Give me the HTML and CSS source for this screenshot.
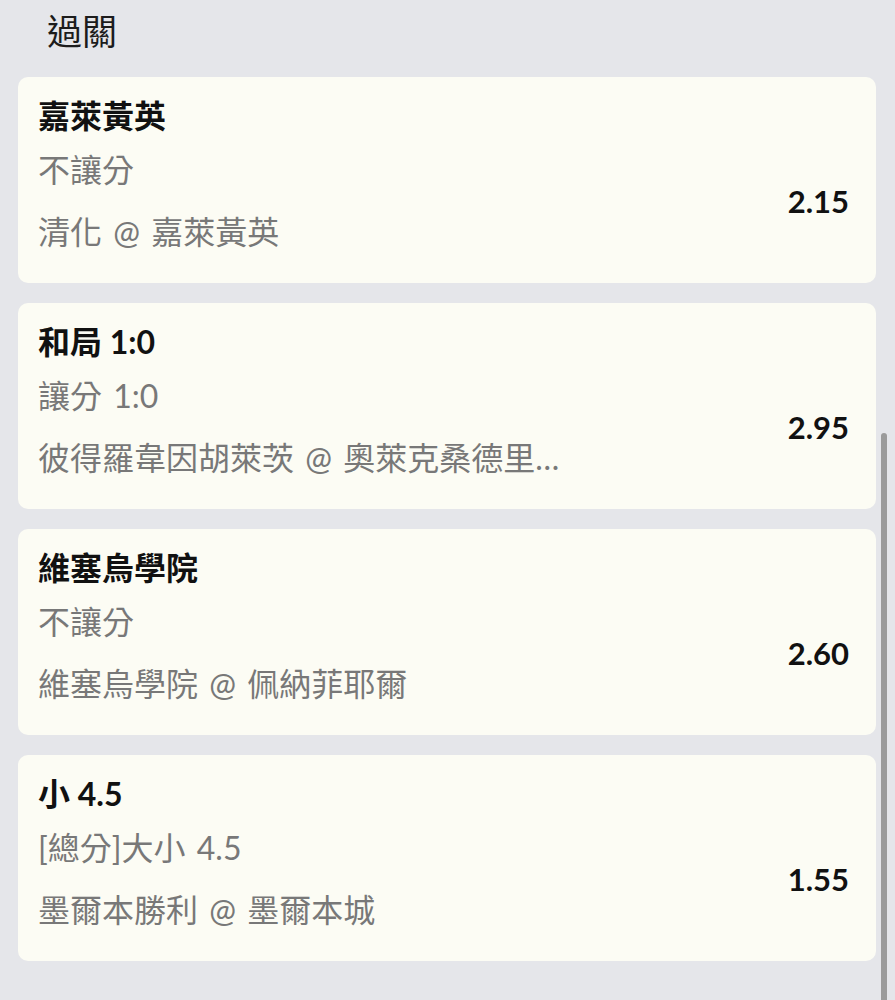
FILE: index.html
```html
<!DOCTYPE html>
<html lang="zh-Hant">
<head>
    <meta charset="UTF-8">
    <meta name="viewport" content="width=device-width, initial-scale=1.0">
    <title>過關</title>
    <link rel="stylesheet" href="styles.css">
</head>
<body>

    <h1 class="page-title">過關</h1>

    <div class="bet-list">
        <div class="bet-card">
            <div class="bet-pick">嘉萊黃英</div>
            <div class="bet-row">
                <div class="bet-lines">
                    <div class="bet-line">不讓分</div>
                    <div class="bet-line">清化 @ 嘉萊黃英</div>
                </div>
                <div class="bet-odds">2.15</div>
            </div>
        </div>

        <div class="bet-card">
            <div class="bet-pick">和局 1:0</div>
            <div class="bet-row">
                <div class="bet-lines">
                    <div class="bet-line">讓分 1:0</div>
                    <div class="bet-line">彼得羅韋因胡萊茨 @ 奧萊克桑德里亞</div>
                </div>
                <div class="bet-odds">2.95</div>
            </div>
        </div>

        <div class="bet-card">
            <div class="bet-pick">維塞烏學院</div>
            <div class="bet-row">
                <div class="bet-lines">
                    <div class="bet-line">不讓分</div>
                    <div class="bet-line">維塞烏學院 @ 佩納菲耶爾</div>
                </div>
                <div class="bet-odds">2.60</div>
            </div>
        </div>

        <div class="bet-card">
            <div class="bet-pick">小 4.5</div>
            <div class="bet-row">
                <div class="bet-lines">
                    <div class="bet-line">[總分]大小 4.5</div>
                    <div class="bet-line">墨爾本勝利 @ 墨爾本城</div>
                </div>
                <div class="bet-odds">1.55</div>
            </div>
        </div>
    </div>

    <!-- scroll indicator -->
    <div class="scroll-thumb"></div>

</body>
</html>
```

FILE: styles.css
```css
/* Reset */
* {
    margin: 0;
    padding: 0;
    box-sizing: border-box;
}

body {
    font-family: 'Lato', 'Noto Sans CJK TC', sans-serif;
    background-color: #e5e6ea;
    color: #111;
    height: 1000px;
    overflow: hidden;
}

.page-title {
    font-size: 35px;
    font-weight: 400;
    line-height: 40px;
    color: #1c1c1c;
    padding: 11px 0 0 47px;
    height: 77px;
}

.bet-list {
    display: flex;
    flex-direction: column;
    gap: 20px;
    padding: 0 19px 0 18px;
}

/* Card */
.bet-card {
    background-color: #fcfcf4;
    border-radius: 10px;
    height: 206px;
    padding: 19px 27px 0 20px;
}

.bet-pick {
    font-size: 32px;
    font-weight: 700;
    line-height: 40px;
    margin-bottom: 14px;
}

.bet-row {
    display: flex;
    align-items: center;
    justify-content: space-between;
}

.bet-lines {
    display: flex;
    flex-direction: column;
    gap: 22px;
    min-width: 0;
    max-width: 528px;
}

.bet-line {
    font-size: 32px;
    line-height: 40px;
    word-spacing: 3px;
    color: #787878;
    white-space: nowrap;
    overflow: hidden;
    text-overflow: ellipsis;
}

.bet-odds {
    font-size: 31px;
    font-weight: 700;
    color: #111;
}

/* Scroll indicator */
.scroll-thumb {
    position: absolute;
    top: 433px;
    left: 881px;
    width: 6px;
    height: 580px;
    border-radius: 3px;
    background-color: #9b9b9b;
}
```
